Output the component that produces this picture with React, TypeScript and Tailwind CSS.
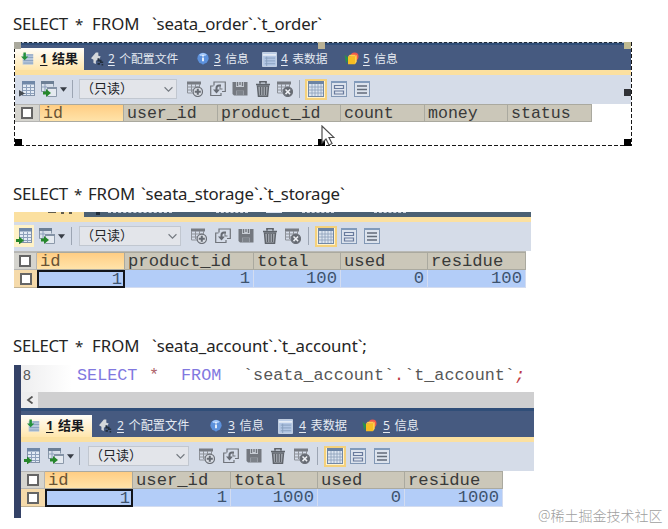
import React from "react";

const mono = "font-['Liberation_Mono',monospace]";
const cjk = "font-['Noto_Sans','Noto_Sans_CJK_SC',sans-serif]";

function Svg({ children, className = "w-4 h-4" }: { children: React.ReactNode; className?: string }) {
  return (
    <svg viewBox="0 0 16 16" className={`${className} shrink-0`} fill="none">
      {children}
    </svg>
  );
}

const Arrow = () => <path d="M0 11h3V8.500l5 4-5 4V14H0z" fill="#26872b" />;

const GridArrow = ({ faded = false }: { faded?: boolean }) => (
  <Svg>
    <rect x="3.500" y="0.500" width="12" height="14" fill="#e3ebf5" stroke="#8292a9" />
    <rect x="3" y="0" width="13" height="3.500" fill="#7088a8" />
    <path d="M4 6.500h11M4 9.500h11M4 12.500h11M7.500 4v10M11.500 4v10" stroke="#8da0bb" />
    {faded ? <path d="M0 9l6 3.500-6 3z" fill="#454b51" /> : <Arrow />}
  </Svg>
);

const FormArrow = () => (
  <Svg>
    <path d="M.5.5h12v5M.5.500v10H5" stroke="#8796a8" fill="#dce4ed" />
    <path d="M0 0h13v3H0z" fill="#6d7f95" />
    <path d="M1 6h5M4 3v7" stroke="#8da0bb" />
    <path d="M6.500 6.500h9v9h-9z" fill="#e5eaf0" stroke="#8c99aa" />
    <path d="M6 6h10v2H6z" fill="#8493a6" />
    <path d="M2 10.500h3V8l5 4-5 4v-2.500H2z" fill="#26872b" />
  </Svg>
);

const TableAdd = ({ remove = false }: { remove?: boolean }) => (
  <Svg>
    <path d="M0 .500h14v3H0z" fill="#777b82" />
    <path d="M.5 3v9H6M1 6h12M1 9h5M4.500 3v8M8.500 3v3M12.500 3v3" stroke="#8d9198" />
    <circle cx="10.800" cy="10.800" r="4.700" fill={remove ? "#666b73" : "#d8dce3"} stroke="#6c7078" strokeWidth="1.200" />
    {remove ? (
      <path d="m8.500 8.500 4.600 4.600m0-4.600-4.600 4.600" stroke="#eef0f4" strokeWidth="1.500" />
    ) : (
      <path d="M10.800 7.800v6M7.800 10.800h6" stroke="#666b73" strokeWidth="2" />
    )}
  </Svg>
);

const Duplicate = () => (
  <Svg>
    <path d="M4 4.500V1h11.300v9.500H12M3.500 5H.700v9.500H11V12" stroke="#70747b" strokeWidth="1.200" />
    <path d="M11 4.500H9Q6.500 4.500 6.500 7v4" stroke="#666b73" strokeWidth="2" />
    <path d="M3 8.500h7l-3.500 4z" fill="#666b73" />
    <path d="M10 4v4h2.500" stroke="#70747b" />
  </Svg>
);

const Save = () => (
  <Svg>
    <path d="M.500 1h15v13.500H2L.500 13z" fill="#74787f" />
    <path d="M4 1h8v5H4z" fill="#c6cbd3" />
    <path d="M5.500 1v4M8 1v3M10.500 1v4" stroke="#70747b" strokeWidth="1.300" />
    <path d="M4 9.500h8V14H4z" fill="#969ba3" />
    <path d="M5 11h6M5 13h6" stroke="#656a71" />
  </Svg>
);

const Trash = () => (
  <Svg>
    <path d="M5 2.500V.700h6v1.800M1 3.500h14" stroke="#5e636a" strokeWidth="1.700" />
    <path d="m2.500 5 1 10.300h9l1-10.300z" fill="#a5aab1" stroke="#60656c" strokeWidth="1.500" />
    <path d="M5.500 6v8M8 6v8M10.500 6v8" stroke="#5c6168" strokeWidth="1.200" />
  </Svg>
);

const GridView = () => (
  <Svg>
    <rect x=".500" y=".500" width="15" height="15" fill="#dce5f0" stroke="#7188a6" />
    <path d="M0 0h16v3H0z" fill="#6c84a4" />
    <path d="M1 6h14M1 9h14M1 12h14M4 3v12M7 3v12M10 3v12M13 3v12" stroke="#8b9fb9" strokeWidth=".8" />
  </Svg>
);

const PageView = ({ lines = false }: { lines?: boolean }) => (
  <Svg>
    <rect x=".500" y=".500" width="15" height="15" fill="#dce3ed" stroke="#8197b4" />
    <path d="M0 0h16v2H0z" fill="#829bbb" />
    {lines ? (
      <path d="M3 5h10M3 8.500h10M3 12h10" stroke="#626b79" strokeWidth="1.300" />
    ) : (
      <path d="M3.500 4.500h9v3h-9zM3.500 10h9v3h-9z" stroke="#687a9c" strokeWidth="1.200" />
    )}
  </Svg>
);

const TabIcons = [
  <Svg key="result" className="w-[13px] h-[14px]">
    <path d="M3 2h12v13H2V2z" fill="#b9c9dd" />
    <path d="M7 3h8M7 6h8M3 10h12M3 13h12" stroke="#7d96b8" />
    <path d="M3 0h3v5h3L4.500 9.500 0 5h3z" fill="#24913b" />
  </Svg>,
  <Svg key="profile" className="w-[13px] h-[14px]">
    <path d="M0 7 6 0h3v4l3 1-2 3-4 2v4L3 13V9z" fill="#d4d7da" />
    <path d="M9 7v3h3v2h3M8 14h3m2 1h2" stroke="#222e3c" strokeWidth="2" />
  </Svg>,
  <Svg key="info" className="w-3 h-[14px]">
    <circle cx="8" cy="7" r="7.500" fill="#5c91dc" />
    <path d="M3 2q5-4 10 0l-2 2H4z" fill="#a7cafa" />
    <path d="M8 3v1.500M8 6v5" stroke="#fff" strokeWidth="2.200" />
    <path d="m6 13 2 3 2-3" fill="#5c91dc" />
  </Svg>,
  <Svg key="data" className="w-[15px] h-[15px]">
    <rect x=".700" y=".700" width="14.600" height="14.600" fill="#b2c6e4" stroke="#d4dfee" />
    <path d="M1 3h14" stroke="#e6edf6" strokeWidth="2" />
    <path d="M3 6.500h11M3 9.500h11M3 12.500h11M5 5v10" stroke="#879fbe" />
  </Svg>,
  <Svg key="objects" className="w-[15px] h-[14px]">
    <path d="m0 3 5 4-3 6z" fill="#2a9148" />
    <circle cx="11.500" cy="5" r="4.500" fill="#ef584d" />
    <path d="M4 5h8v9H4z" fill="#f6bd22" />
    <path d="m4 5 2-2h7l-1 2zm8 0 2-2v8l-2 3z" fill="#ffcf4c" />
  </Svg>,
];

function TabBar({ big = false }: { big?: boolean }) {
  const labels = ["结果", "个配置文件", "信息", "表数据", "信息"];
  const widths = big
    ? ["w-[71px] pl-[6px] gap-[6px]", "w-[111px] pl-[7px] gap-[5px]", "w-[68px] pl-[7px] gap-[6px]", "w-[85px] pl-[7px] gap-[6px]", "w-20 pl-[6px] gap-[6px]"]
    : ["w-[69px] pl-[6px] gap-[6px]", "w-[106px] pl-[7px] gap-[4px]", "w-[66px] pl-[7px] gap-[5px]", "w-[83px] pl-[6px] gap-[4px]", "w-20 pl-[5px] gap-[4px]"];
  return (
    <div className={`${cjk} ${big ? "h-[29px] pt-[7px] text-[12.2px]" : "h-[28px] pt-[6px] text-[11.8px]"} flex bg-[#465a80] border-t-[3px] border-[#304e78] text-[#e5eaf2]`}>
      <div className="-mt-[3px] flex h-[22px] w-full">
        {labels.map((label, i) => (
          <div key={i} className={`${widths[i]} flex h-full shrink-0 items-center whitespace-nowrap ${i === 0 ? "bg-gradient-to-b from-[#fffdf8] to-[#ffe6ac] text-[13px] font-bold text-[#17191d]" : ""}`}>
            {TabIcons[i]}
            <span><span className="underline underline-offset-2">{i + 1}</span><span className="ml-[4.5px]">{label}</span></span>
          </div>
        ))}
      </div>
    </div>
  );
}

const toolbars = [
  { first: "ml-1", second: "ml-[6px]", sep: "ml-[5px]", select: "ml-[6px] w-[98px]", icons: "gap-[6.5px]", end: "ml-[6px] mr-[5px]", last: "ml-[7px]" },
  { first: "", second: "ml-[5px]", sep: "ml-[6px]", select: "ml-[7px] w-[102px]", icons: "gap-[7.5px]", end: "ml-[7px] mr-[6px]", last: "ml-[7px]" },
  { first: "ml-[3px]", second: "ml-2", sep: "ml-[5px]", select: "ml-2 w-[101px]", icons: "gap-[7.7px]", end: "ml-[7px] mr-[6px]", last: "ml-2" },
];

function Toolbar({ variant }: { variant: number }) {
  const s = toolbars[variant];
  return (
    <div className="flex h-[29px] items-center bg-[#d5dce8] pb-px">
      <div className={`${s.first} ${variant === 1 ? "flex h-[22px] w-5 items-center justify-center bg-[#fff2c7]" : "flex"}`}>
        <GridArrow faded={variant === 0} />
      </div>
      <div className={`${s.second} flex`}><FormArrow /></div>
      <Svg className="ml-[3px] h-[7px] w-[7px]"><path d="M0 3h16l-8 10z" fill="#373d46" /></Svg>
      <div className={`${s.sep} h-[18px] w-px shrink-0 bg-[#9ca5b3]`} />
      <div className={`${s.select} ${cjk} flex h-5 shrink-0 items-center justify-between border border-[#c1c7d0] bg-[#e3e5ea] pl-px pr-[3px] text-[13px] text-[#202227]`}>
        <span className="-mt-px whitespace-nowrap">（只读）</span>
        <Svg className="h-[9px] w-[9px]"><path d="m1 4 7 7 7-7" stroke="#747980" strokeWidth="2" /></Svg>
      </div>
      <div className={`ml-[10px] flex ${s.icons}`}>
        <TableAdd /><Duplicate /><Save /><Trash /><TableAdd remove />
      </div>
      <div className={`${s.end} h-[18px] w-px shrink-0 bg-[#9ca5b3]`} />
      <div className="flex h-[21px] w-[22px] shrink-0 items-center justify-center border-2 border-[#f4d17c] bg-[#fff2cd]"><GridView /></div>
      <div className="ml-1 flex"><PageView /></div>
      <div className={`${s.last} flex`}><PageView lines /></div>
    </div>
  );
}

const Check = () => <div className="h-3 w-3 shrink-0 border-2 border-[#656565] bg-white" />;

function Table({ head, row, cols, size }: { head: string[]; row?: string[]; cols: string; size: string }) {
  return (
    <div className={`grid ${cols} ${mono} ${size} w-max text-[#393a39]`}>
      <div className="flex h-[18px] items-center justify-center border border-l-0 border-[#b5b5b3] bg-[#d5d4ce]"><Check /></div>
      {head.map((h, i) => (
        <div key={h} className={`h-[18px] whitespace-pre border-y border-r border-[#aaa99f] pl-[3px] leading-[17px] ${i === 0 ? "bg-gradient-to-b from-[#ffcd83] to-[#ffe3a9] text-[#695334]" : "bg-[#cbc7b9]"}`}>{h}</div>
      ))}
      {row && (
        <>
          <div className="flex h-[18px] items-center justify-center border-b border-[#c3b393] bg-[#f5daaa]"><Check /></div>
          {row.map((v, i) => (
            <div key={i} className={`h-[18px] bg-[#b3cdf8] text-right text-[#3e536e] ${i === 0 ? "border-2 border-[#12151b] pr-px leading-[15px]" : "border-r border-b border-[#d3dcf0] pr-[3px] leading-[18px]"}`}>{v}</div>
          ))}
        </>
      )}
    </div>
  );
}

function Heading({ words }: { words: [string, string][] }) {
  return (
    <div className="flex h-6 whitespace-nowrap pl-[13px] font-['Noto_Sans','Open_Sans',sans-serif] text-[16.8px] leading-6 text-[#242424]">
      {words.map(([text, width]) => <span key={text} className={`${width} shrink-0`}>{text}</span>)}
    </div>
  );
}

const Handle = ({ place }: { place: string }) => <i className={`absolute h-[7px] w-[7px] ${place}`} />;

export default function App() {
  return (
    <main className="relative h-[529px] w-[668px] overflow-hidden bg-white pt-3">
      <Heading words={[["SELECT", "w-[62px] tracking-[-0.3px]"], ["*", "w-[17px] text-[15px]"], ["FROM", "w-[60px]"], ["`seata_order`.`t_order`", "tracking-[-0.17px]"]]} />
      <section className="relative ml-[14px] mt-[6px] h-[104px] w-[618px] pl-px">
        <TabBar />
        <div className="h-[5px] bg-[#fbe0a0]" />
        <Toolbar variant={0} />
        <Table cols="grid-cols-[25px_84px_94px_123px_84px_83px_84px]" size="text-[16.6px]" head={["id", "user_id", "product_id", "count", "money", "status"]} />
        <div className="absolute inset-x-0 top-0 h-px bg-[repeating-linear-gradient(90deg,#1f2937_0_3px,#b0bbc9_3px_5px)]" />
        <div className="absolute inset-x-0 bottom-0 h-[1.500px] bg-[repeating-linear-gradient(90deg,#161616_0_4px,#ffffff_4px_6px)]" />
        <div className="absolute inset-y-0 left-0 w-px bg-[repeating-linear-gradient(180deg,#161616_0_4px,#ffffff_4px_6px)]" />
        <div className="absolute inset-y-0 right-0 w-px bg-[repeating-linear-gradient(180deg,#161616_0_4px,#ffffff_4px_6px)]" />
        <Handle place="left-0 top-0 bg-[#aaa99d]" />
        <Handle place="left-[304px] top-0 bg-[#bbb295]" />
        <Handle place="right-px top-0 bg-[#c0ba91]" />
        <Handle place="right-px top-[47px] bg-[#303236]" />
        <Handle place="left-px bottom-0 bg-black" />
        <Handle place="left-[304px] bottom-0 bg-black" />
        <Handle place="right-px bottom-0 bg-black" />
        <svg className="absolute left-[307px] top-[83px] h-[22px] w-[14px]" viewBox="0 0 14 22">
          <path d="M1 1v17l4-4 3 6 3-1.500-3-6h5z" fill="#fff" stroke="#4d4d4d" strokeWidth="1.200" />
        </svg>
      </section>
      <div className="mt-9">
        <Heading words={[["SELECT", "w-[61px] tracking-[-0.3px]"], ["*", "w-[14px] text-[15px]"], ["FROM", "w-[53px] tracking-[-0.1px]"], ["`seata_storage`.`t_storage`", "tracking-[-0.12px]"]]} />
      </div>
      <section className="ml-[14px] mt-[6px] w-[517px]">
        <div className="flex h-[5px] items-start overflow-hidden bg-[#4b6073]">
          <div className="flex h-full w-[70px] justify-end gap-[5px] bg-[#fbe0a0] pr-3"><i className="h-px w-2 bg-[#625c4b]" /><i className="h-[2px] w-[3px] bg-[#625c4b]" /><i className="h-[2px] w-[3px] bg-[#625c4b]" /></div>
          <i className="ml-3 h-[3px] w-1 bg-[#202c39]" />
          <div className="ml-2 w-16 border-t border-dashed border-[#cbd2dc]" />
          <div className="ml-11 w-8 border-t border-dashed border-[#cbd2dc]" />
          <i className="ml-[18px] h-px w-4 bg-[#dbe3ef]" />
          <div className="ml-5 w-8 border-t border-dashed border-[#cbd2dc]" />
          <div className="ml-10 w-8 border-t border-dashed border-[#cbd2dc]" />
        </div>
        <div className="h-[5px] bg-[#fbe0a0]" />
        <Toolbar variant={1} />
        <div className="h-px w-[512px] bg-[#b9b9b5]" />
        <Table cols="grid-cols-[23px_88px_129px_87px_87px_98px]" size="text-[17.2px]" head={["id", "product_id", "total", "used", "residue"]} row={["1", "1", "100", "0", "100"]} />
      </section>
      <div className="mt-[46px]">
        <Heading words={[["SELECT", "w-[62px] tracking-[-0.3px]"], ["*", "w-[17px] text-[15px]"], ["FROM", "w-[60px]"], ["`seata_account`.`t_account`;", "tracking-[-0.05px]"]]} />
      </div>
      <section className="ml-[14px] mt-[7px] h-[153px] w-[520px] border-l-[7px] border-[#344267]">
        <div className={`flex h-[27px] whitespace-pre bg-gradient-to-r from-[#eeeeef] via-white via-[10%] to-white pl-[2px] pt-px text-[16.8px] leading-[19px] ${mono}`}>
          <span className="w-[54px] text-[14px] text-[#555] font-['Liberation_Sans',sans-serif]">8</span>
          <span className="w-[72px] text-[#8178df]">SELECT</span>
          <span className="w-8 text-[#ad6267]">*</span>
          <span className="w-[62px] text-[#8178df]">FROM</span>
          <span className="text-[#575757]">`seata_account`<b className="font-normal text-[#bd3944]">.</b>`t_account`<b className="font-normal italic text-[#bd3944]">;</b></span>
        </div>
        <div className="flex h-4 bg-[#cfcfd0]">
          <div className="flex w-[17px] items-center justify-center bg-[#ededee]"><Svg className="h-2 w-2"><path d="M13 1 4 8l9 7" stroke="#555" strokeWidth="3.500" /></Svg></div>
        </div>
        <TabBar big />
        <div className="h-[5px] bg-[#fbe0a0]" />
        <Toolbar variant={2} />
        <Table cols="grid-cols-[24px_88px_98px_87px_87px_98px]" size="text-[17.2px]" head={["id", "user_id", "total", "used", "residue"]} row={["1", "1", "1000", "0", "1000"]} />
      </section>
      <span className="absolute left-[538px] top-[506px] whitespace-nowrap text-[14px] leading-5 text-[#a0a0a0] font-['Noto_Sans','Noto_Sans_CJK_SC',sans-serif] font-light">@稀土掘金技术社区</span>
    </main>
  );
}
